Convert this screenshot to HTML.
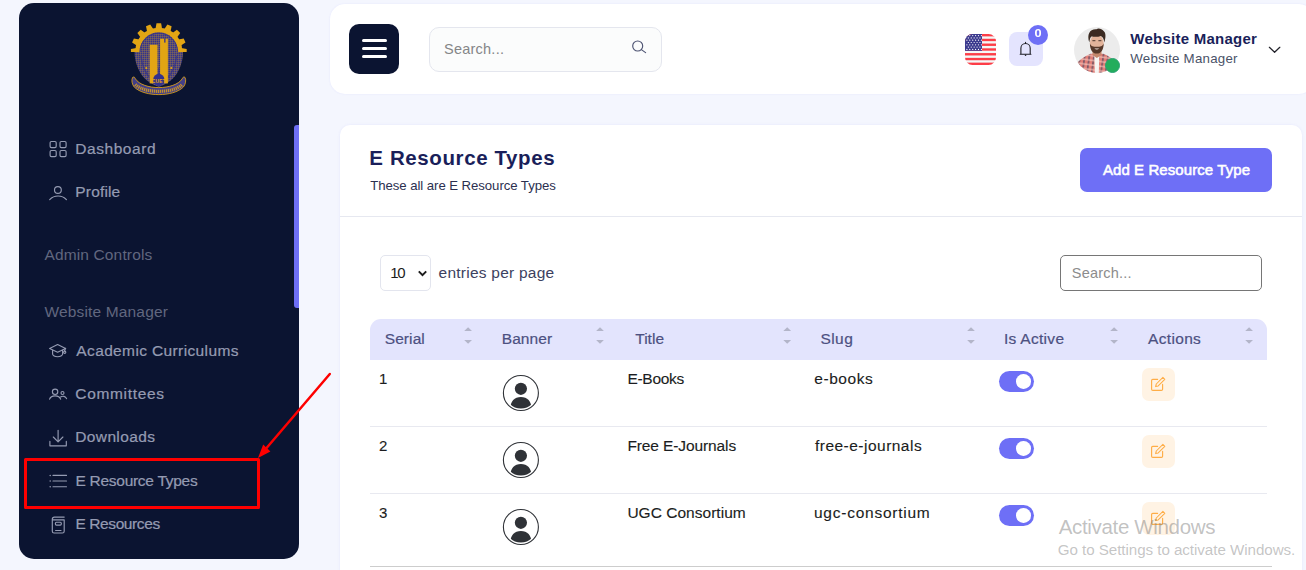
<!DOCTYPE html>
<html lang="en">
<head>
<meta charset="utf-8">
<title>E Resource Types</title>
<style>
*{box-sizing:border-box;margin:0;padding:0}
html,body{width:1306px;height:570px;overflow:hidden}
body{background:#f4f6fe;font-family:"Liberation Sans",sans-serif;position:relative}
.a{position:absolute}
.t{position:absolute;white-space:pre;line-height:30px;height:30px}
.sidebar{left:19px;top:3px;width:280px;height:556px;border-radius:15px;background:#0b1431}
.thumb{left:294px;top:125px;width:5px;height:183px;border-radius:3px 0 0 3px;background:#6e6ff6}
.header{left:330px;top:4px;width:984px;height:90px;border-radius:15px;background:#fff;box-shadow:0 0 2px rgba(110,111,246,.12)}
.burger{left:349px;top:24px;width:50px;height:50px;border-radius:10px;background:#0b1431}
.burger i{position:absolute;left:13px;width:25px;height:3px;border-radius:2px;background:#fff}
.search{left:429px;top:27px;width:233px;height:45px;border-radius:10px;background:#fbfcfc;border:1px solid #e4e6ee}
.bell{left:1008.8px;top:32.3px;width:33.8px;height:34px;border-radius:8px;background:#e4e4fe}
.badge{left:1028px;top:24.8px;width:20.2px;height:20.2px;border-radius:50%;background:#6e6ff6;color:#fff;font-size:11.2px;font-weight:700;text-align:center;line-height:17.2px}
.badge b{display:inline-block;transform:scaleX(1.14)}
.dot{left:1105px;top:58px;width:15px;height:15px;border-radius:50%;background:#23ad5c;border:1.5px solid #29a272}
.card{left:340px;top:125px;width:962px;height:460px;border-radius:10px 10px 0 0;background:#fff;box-shadow:0 0 3px rgba(110,111,246,.10)}
.hr{left:340px;top:216px;width:962px;height:1px;background:#e6e8f0}
.addbtn{left:1080px;top:148px;width:192px;height:44px;border-radius:7px;background:#6e6ff6}
.sel{left:380px;top:255px;width:51px;height:36px;border-radius:5px;border:1px solid #e3e5ee;background:#fff}
.tsearch{left:1060px;top:255px;width:202px;height:36px;border-radius:5px;border:1px solid #767676;background:#fff}
.thead{left:370px;top:319px;width:897px;height:41px;border-radius:11px 11px 0 0;background:#e3e4fd}
.rl{left:370px;width:897px;height:1px;background:#e8e9f0}
.tog{left:999px;width:35px;height:21px;border-radius:11px;background:#6e6ff6}
.tog i{position:absolute;right:3px;top:3.2px;width:14.6px;height:14.6px;border-radius:50%;background:#fff}
.edit{left:1142px;width:33px;height:33px;border-radius:7px;background:#fff3e4}
.redbox{left:24px;top:458px;width:236px;height:51px;border:3px solid #fe0000;border-radius:1.5px}
</style>
</head>
<body>
<aside>
<div class="a sidebar"></div>
<div class="a thumb"></div>
<svg class="a" style="left:124px;top:16px" width="70" height="84" viewBox="124 16 70 84"><defs><pattern id="grid" width="2" height="2" patternUnits="userSpaceOnUse"><rect width="2" height="2" fill="#33328c"/><path d="M0 .4H2M.4 0V2" stroke="#9c7c44" stroke-width=".46"/></pattern><clipPath id="gclip"><rect x="124" y="16" width="70" height="36.1"/></clipPath></defs><circle cx="158.8" cy="51.2" r="20" fill="url(#grid)"/><path d="M134.6 50 H183 C183.4 58 181.5 65 178 71.5 C174 79 167 84 158.8 86.8 C150.6 84 143.6 79 139.6 71.5 C136.1 65 134.2 58 134.6 50 Z" fill="url(#grid)"/><g clip-path="url(#gclip)"><polygon points="136.3,47.9 130.9,48.9 130.9,53.5 136.3,54.5" fill="#e2a514"/><polygon points="139.3,39.5 133.9,38.4 132.1,42.6 136.7,45.6" fill="#e2a514"/><polygon points="145.2,33.0 140.7,29.8 137.4,33.1 140.6,37.6" fill="#e2a514"/><polygon points="153.2,29.1 150.2,24.5 146.0,26.3 147.1,31.7" fill="#e2a514"/><polygon points="162.1,28.7 161.1,23.3 156.5,23.3 155.5,28.7" fill="#e2a514"/><polygon points="170.5,31.7 171.6,26.3 167.4,24.5 164.4,29.1" fill="#e2a514"/><polygon points="177.0,37.6 180.2,33.1 176.9,29.8 172.4,33.0" fill="#e2a514"/><polygon points="180.9,45.6 185.5,42.6 183.7,38.4 178.3,39.5" fill="#e2a514"/><polygon points="181.3,54.5 186.7,53.5 186.7,48.9 181.3,47.9" fill="#e2a514"/><circle cx="158.8" cy="51.2" r="21.2" fill="none" stroke="#e2a514" stroke-width="4.6"/></g><path d="M139.9 52.1 A18.9 18.9 0 0 1 177.70000000000002 52.1" fill="none" stroke="#33328c" stroke-width=".9"/><path d="M141 56 C142 66 146 74 151 79" fill="none" stroke="#33328c" stroke-width="1.5" opacity=".7"/><path d="M176.6 56 C175.6 66 171.6 74 166.6 79" fill="none" stroke="#33328c" stroke-width="1.5" opacity=".7"/><rect x="149.7" y="44.8" width="7.8" height="38.6" fill="#e2a514"/><rect x="160.1" y="38.8" width="7.8" height="44.6" fill="#e2a514"/><rect x="164.2" y="38.4" width="1.3" height="4.2" fill="#33328c"/><circle cx="146.3" cy="68" r="1.1" fill="#e2a514"/><circle cx="171.3" cy="68" r="1.1" fill="#e2a514"/><path d="M153.2 83.4 V79.4 A5.6 5.6 0 0 1 164.4 79.4 V83.4 L158.8 86.4 Z" fill="#33328c"/><rect x="158.35" y="68" width=".9" height="7" fill="#33328c"/><text x="158.9" y="82.9" font-family="Liberation Sans, sans-serif" font-size="4.9" font-weight="700" fill="#e2a514" text-anchor="middle" letter-spacing=".25">CUET</text><path d="M132.6 77.4 C133.6 76.6 135 77.2 135.4 78.8 C139 84.6 149 87.6 158.8 87.6 C168.6 87.6 178.6 84.6 182.2 78.8 C182.6 77.2 184 76.6 185 77.4 C186.4 80 185.6 84.4 183.4 87 C178 92.4 168 94.6 158.8 94.6 C149.6 94.6 139.6 92.4 134.2 87 C132 84.4 131.2 80 132.6 77.4 Z" fill="#433f88" stroke="#e2a514" stroke-width="1" stroke-linejoin="round" stroke-opacity=".85"/><path d="M135.4 84.4 C140 89.4 150 91.3 158.8 91.3 C167.6 91.3 177.6 89.4 182.2 84.4" fill="none" stroke="#e2a514" stroke-width="3.2" stroke-dasharray="1.3 .7" opacity=".8"/></svg><svg class="a" style="left:44px;top:130px" width="30" height="410" viewBox="44 130 30 410"><rect x="50.1" y="141.5" width="6.1" height="6.1" rx="1.3" fill="none" stroke="#959bb2" stroke-width="1.15" stroke-linecap="round" stroke-linejoin="round"/><rect x="50.1" y="150.5" width="6.1" height="6.1" rx="1.3" fill="none" stroke="#959bb2" stroke-width="1.15" stroke-linecap="round" stroke-linejoin="round"/><rect x="60.0" y="141.5" width="6.1" height="6.1" rx="1.3" fill="none" stroke="#959bb2" stroke-width="1.15" stroke-linecap="round" stroke-linejoin="round"/><rect x="60.0" y="150.5" width="6.1" height="6.1" rx="1.3" fill="none" stroke="#959bb2" stroke-width="1.15" stroke-linecap="round" stroke-linejoin="round"/><circle cx="57.9" cy="190" r="3.4" fill="none" stroke="#959bb2" stroke-width="1.15" stroke-linecap="round" stroke-linejoin="round"/><path d="M49.7 199.6 A11.5 11.5 0 0 1 66.4 199.6" fill="none" stroke="#959bb2" stroke-width="1.15" stroke-linecap="round" stroke-linejoin="round"/><path d="M49.6 348.4 L57.6 344.6 L65.6 348.4 L57.6 352.2 Z" fill="none" stroke="#959bb2" stroke-width="1.15" stroke-linecap="round" stroke-linejoin="round"/><path d="M52.6 350.2 V354.2 C53.6 357.6 61.6 357.6 62.6 354.2 V350.2" fill="none" stroke="#959bb2" stroke-width="1.15" stroke-linecap="round" stroke-linejoin="round"/><path d="M65.6 348.4 L64.6 350.8" fill="none" stroke="#959bb2" stroke-width="1.15" stroke-linecap="round" stroke-linejoin="round"/><circle cx="64.7" cy="352.2" r="1.1" fill="none" stroke="#959bb2" stroke-width="1.15" stroke-linecap="round" stroke-linejoin="round"/><circle cx="55.1" cy="391.8" r="2.7" fill="none" stroke="#959bb2" stroke-width="1.15" stroke-linecap="round" stroke-linejoin="round"/><path d="M49.6 399.2 C51 394.8 59.2 394.8 60.6 399.2" fill="none" stroke="#959bb2" stroke-width="1.15" stroke-linecap="round" stroke-linejoin="round"/><circle cx="62.5" cy="393" r="1.5" fill="none" stroke="#959bb2" stroke-width="1.15" stroke-linecap="round" stroke-linejoin="round"/><path d="M60.6 397 C62.6 395.6 65.6 396.2 66.6 398.6" fill="none" stroke="#959bb2" stroke-width="1.15" stroke-linecap="round" stroke-linejoin="round"/><path d="M58.1 430.3 V441.6 M53.3 437 L58.1 441.8 L62.9 437" fill="none" stroke="#959bb2" stroke-width="1.15" stroke-linecap="round" stroke-linejoin="round"/><path d="M49.9 441.4 V445.8 H66.3 V441.4" fill="none" stroke="#959bb2" stroke-width="1.15" stroke-linecap="round" stroke-linejoin="round"/><path d="M53 475.4 H66.5" fill="none" stroke="#959bb2" stroke-width="1.15" stroke-linecap="round" stroke-linejoin="round"/><circle cx="50.2" cy="475.4" r=".75" fill="#959bb2"/><path d="M53 481.0 H66.5" fill="none" stroke="#959bb2" stroke-width="1.15" stroke-linecap="round" stroke-linejoin="round"/><circle cx="50.2" cy="481.0" r=".75" fill="#959bb2"/><path d="M53 486.7 H66.5" fill="none" stroke="#959bb2" stroke-width="1.15" stroke-linecap="round" stroke-linejoin="round"/><circle cx="50.2" cy="486.7" r=".75" fill="#959bb2"/><path d="M64.2 517.1 H54.4 Q52.3 517.1 52.3 519.2 V531.2 Q52.3 533 54.1 533 H62.4 Q64.2 533 64.2 531.2 V519.9 H53" fill="none" stroke="#959bb2" stroke-width="1.15" stroke-linecap="round" stroke-linejoin="round"/><rect x="55.4" y="522.2" width="5.9" height="2.9" rx="1" fill="none" stroke="#959bb2" stroke-width="1.15" stroke-linecap="round" stroke-linejoin="round"/><path d="M55.6 530.5 H61" fill="none" stroke="#959bb2" stroke-width="1.15" stroke-linecap="round" stroke-linejoin="round"/></svg>
<span class='t' style='left:75.30px;top:133.83px;font-size:15.5px;font-weight:400;color:#959bb2;letter-spacing:0.550px;-webkit-text-stroke:.22px #959bb2'>Dashboard</span>
<span class='t' style='left:75.30px;top:176.93px;font-size:15.5px;font-weight:400;color:#959bb2;letter-spacing:0.167px;-webkit-text-stroke:.22px #959bb2'>Profile</span>
<span class='t' style='left:44.40px;top:240.03px;font-size:15.5px;font-weight:400;color:#61677f;letter-spacing:0.146px;'>Admin Controls</span>
<span class='t' style='left:44.40px;top:296.73px;font-size:15.5px;font-weight:400;color:#61677f;letter-spacing:0.164px;'>Website Manager</span>
<span class='t' style='left:76.30px;top:335.63px;font-size:15.5px;font-weight:400;color:#959bb2;letter-spacing:0.374px;-webkit-text-stroke:.22px #959bb2'>Academic Curriculums</span>
<span class='t' style='left:75.30px;top:378.63px;font-size:15.5px;font-weight:400;color:#959bb2;letter-spacing:0.667px;-webkit-text-stroke:.22px #959bb2'>Committees</span>
<span class='t' style='left:75.30px;top:422.23px;font-size:15.5px;font-weight:400;color:#959bb2;letter-spacing:0.362px;-webkit-text-stroke:.22px #959bb2'>Downloads</span>
<span class='t' style='left:75.50px;top:465.73px;font-size:15.5px;font-weight:400;color:#959bb2;letter-spacing:-0.280px;-webkit-text-stroke:.22px #959bb2'>E Resource Types</span>
<span class='t' style='left:75.50px;top:508.83px;font-size:15.5px;font-weight:400;color:#959bb2;letter-spacing:-0.410px;-webkit-text-stroke:.22px #959bb2'>E Resources</span>
</aside>
<header>
<div class="a header"></div>
<div class="a burger"><i style="top:15px"></i><i style="top:23px"></i><i style="top:31px"></i></div>
<div class="a search"></div>
<div class="a bell"></div>
<div class="a badge"><b>0</b></div>
<svg class="a" style="left:628px;top:38px" width="22" height="20" viewBox="628 38 22 20"><circle cx="637.7" cy="46" r="5" fill="none" stroke="#4d5372" stroke-width="1.15"/><path d="M641.4 49.6 L645.6 52.6" stroke="#4d5372" stroke-width="1.15" stroke-linecap="round"/></svg><svg class="a" style="left:965px;top:34px" width="31" height="31" viewBox="0 0 31 31"><defs><clipPath id="fc"><rect width="31" height="31" rx="7.5"/></clipPath></defs><g clip-path="url(#fc)"><rect width="31" height="31" fill="#f3f8f8"/><rect x="0" y="0.00" width="31" height="2.38" fill="#fd3d47"/><rect x="0" y="4.77" width="31" height="2.38" fill="#fd3d47"/><rect x="0" y="9.54" width="31" height="2.38" fill="#fd3d47"/><rect x="0" y="14.31" width="31" height="2.38" fill="#fd3d47"/><rect x="0" y="19.08" width="31" height="2.38" fill="#fd3d47"/><rect x="0" y="23.85" width="31" height="2.38" fill="#fd3d47"/><rect x="0" y="28.62" width="31" height="2.38" fill="#fd3d47"/><rect width="17" height="16.8" fill="#3c3b8f"/><circle cx="1.90" cy="1.60" r=".62" fill="#fff"/><circle cx="4.80" cy="1.60" r=".62" fill="#fff"/><circle cx="7.70" cy="1.60" r=".62" fill="#fff"/><circle cx="10.60" cy="1.60" r=".62" fill="#fff"/><circle cx="13.50" cy="1.60" r=".62" fill="#fff"/><circle cx="16.40" cy="1.60" r=".62" fill="#fff"/><circle cx="3.35" cy="3.90" r=".62" fill="#fff"/><circle cx="6.25" cy="3.90" r=".62" fill="#fff"/><circle cx="9.15" cy="3.90" r=".62" fill="#fff"/><circle cx="12.05" cy="3.90" r=".62" fill="#fff"/><circle cx="14.95" cy="3.90" r=".62" fill="#fff"/><circle cx="1.90" cy="6.20" r=".62" fill="#fff"/><circle cx="4.80" cy="6.20" r=".62" fill="#fff"/><circle cx="7.70" cy="6.20" r=".62" fill="#fff"/><circle cx="10.60" cy="6.20" r=".62" fill="#fff"/><circle cx="13.50" cy="6.20" r=".62" fill="#fff"/><circle cx="16.40" cy="6.20" r=".62" fill="#fff"/><circle cx="3.35" cy="8.50" r=".62" fill="#fff"/><circle cx="6.25" cy="8.50" r=".62" fill="#fff"/><circle cx="9.15" cy="8.50" r=".62" fill="#fff"/><circle cx="12.05" cy="8.50" r=".62" fill="#fff"/><circle cx="14.95" cy="8.50" r=".62" fill="#fff"/><circle cx="1.90" cy="10.80" r=".62" fill="#fff"/><circle cx="4.80" cy="10.80" r=".62" fill="#fff"/><circle cx="7.70" cy="10.80" r=".62" fill="#fff"/><circle cx="10.60" cy="10.80" r=".62" fill="#fff"/><circle cx="13.50" cy="10.80" r=".62" fill="#fff"/><circle cx="16.40" cy="10.80" r=".62" fill="#fff"/><circle cx="3.35" cy="13.10" r=".62" fill="#fff"/><circle cx="6.25" cy="13.10" r=".62" fill="#fff"/><circle cx="9.15" cy="13.10" r=".62" fill="#fff"/><circle cx="12.05" cy="13.10" r=".62" fill="#fff"/><circle cx="14.95" cy="13.10" r=".62" fill="#fff"/><circle cx="1.90" cy="15.40" r=".62" fill="#fff"/><circle cx="4.80" cy="15.40" r=".62" fill="#fff"/><circle cx="7.70" cy="15.40" r=".62" fill="#fff"/><circle cx="10.60" cy="15.40" r=".62" fill="#fff"/><circle cx="13.50" cy="15.40" r=".62" fill="#fff"/><circle cx="16.40" cy="15.40" r=".62" fill="#fff"/></g></svg><svg class="a" style="left:1015px;top:38px" width="22" height="22" viewBox="1015 38 22 22"><path d="M1020.2 54.2 H1030.9 M1020.9 54.2 V48.2 A4.65 4.65 0 0 1 1030.2 48.2 V54.2 M1025.55 43.4 V42.4" fill="none" stroke="#1d1d24" stroke-width="1.1" stroke-linecap="round"/><circle cx="1025.55" cy="55.2" r=".8" fill="#1d1d24"/></svg><svg class="a" style="left:1074px;top:27px" width="46" height="46" viewBox="0 0 46 46"><defs><clipPath id="ac"><circle cx="23" cy="23" r="23"/></clipPath><filter id="ab" x="-10%" y="-10%" width="120%" height="120%"><feGaussianBlur stdDeviation=".55"/></filter><pattern id="plaid" width="4.6" height="4.6" patternUnits="userSpaceOnUse" patternTransform="rotate(8)"><rect width="4.6" height="4.6" fill="#e27d76"/><rect width="1.7" height="4.6" fill="#5d4a60" opacity=".75"/><rect width="4.6" height="1.6" y="2.2" fill="#f3c0b6" opacity=".75"/></pattern></defs><g clip-path="url(#ac)"><rect width="46" height="46" fill="#ececec"/><g filter="url(#ab)"><path d="M-1 46 C0 37 6 31.5 16.5 26.8 L29.5 26.8 C40 31.5 44.5 37 45.5 46 Z" fill="url(#plaid)"/><path d="M20.4 29 H25.2 L24.8 46 H20.8 Z" fill="#f6f4f2"/><path d="M18.5 22 H27.5 V28 L22.8 31 L18.5 28 Z" fill="#c4876c"/><ellipse cx="22.8" cy="16.2" rx="6.9" ry="8.4" fill="#e2b39a"/><path d="M18.4 13.6 H21.4 M24.4 13.6 H27.4" stroke="#4a342a" stroke-width="1.1" opacity=".8"/><path d="M15.9 16.5 C16 23 18.6 26.6 22.8 26.6 C27 26.6 29.6 23 29.7 16.5 C28.4 19.6 26.2 19.8 22.8 19.8 C19.4 19.8 17.2 19.6 15.9 16.5 Z" fill="#553729"/><path d="M20.3 21.4 Q22.8 23.4 25.3 21.4 Z" fill="#f5ebe6"/><path d="M15.3 15.5 C12.6 7 16 1.6 22.5 2.2 C24.5 .8 28 2 29.6 4 C32.4 6.2 31.6 11 30.4 15.5 C29.8 11.6 28.6 9.6 26.6 9 C23 10.6 18.6 9.4 17.4 9.4 C16 10.6 15.8 12.6 15.3 15.5 Z" fill="#3a2a22"/></g></g></svg><svg class="a" style="left:1266px;top:43px" width="18" height="14" viewBox="1266 43 18 14"><path d="M1269.4 47.3 L1274.6 52.3 L1279.8 47.3" fill="none" stroke="#23232b" stroke-width="1.25" stroke-linecap="round" stroke-linejoin="round"/></svg>
<div class="a dot"></div>
<span class='t' style='left:444.00px;top:34.38px;font-size:14.5px;font-weight:400;color:#858688;letter-spacing:0.237px;'>Search...</span>
<span class='t' style='left:1130.30px;top:23.50px;font-size:15px;font-weight:700;color:#1a1f5a;letter-spacing:0.250px;'>Website Manager</span>
<span class='t' style='left:1130.30px;top:44.19px;font-size:13.3px;font-weight:400;color:#4a5268;letter-spacing:0.229px;'>Website Manager</span>
</header>
<main>
<div class="a card"></div>
<div class="a hr"></div>
<div class="a addbtn"></div>
<div class="a sel"></div>
<div class="a tsearch"></div>
<div class="a thead"></div>
<div class="a rl" style="top:426px"></div>
<div class="a rl" style="top:493px"></div>
<div class="a rl" style="top:566px;width:902px;background:#cdcdcd"></div>
<div class="a tog" style="top:371px"><i></i></div>
<div class="a tog" style="top:438px"><i></i></div>
<div class="a tog" style="top:505px"><i></i></div>
<div class="a edit" style="top:368px"></div>
<div class="a edit" style="top:435px"></div>
<div class="a edit" style="top:502px"></div>
<svg class="a" style="left:414px;top:266px" width="16" height="14" viewBox="414 266 16 14"><path d="M418.8 271.4 L422.5 275.1 L426.2 271.4" fill="none" stroke="#1b1b1b" stroke-width="2" /></svg><svg class="a" style="left:370px;top:319px" width="897" height="41" viewBox="370 319 897 41"><path d="M464.20000000000005 331 L468.1 327.3 L472.0 331 Z M464.20000000000005 340 L468.1 343.7 L472.0 340 Z" fill="#b3b5c9"/><path d="M596.1 331 L600.0 327.3 L603.9 331 Z M596.1 340 L600.0 343.7 L603.9 340 Z" fill="#b3b5c9"/><path d="M783.3000000000001 331 L787.2 327.3 L791.1 331 Z M783.3000000000001 340 L787.2 343.7 L791.1 340 Z" fill="#b3b5c9"/><path d="M967.1 331 L971.0 327.3 L974.9 331 Z M967.1 340 L971.0 343.7 L974.9 340 Z" fill="#b3b5c9"/><path d="M1110.1999999999998 331 L1114.1 327.3 L1118.0 331 Z M1110.1999999999998 340 L1114.1 343.7 L1118.0 340 Z" fill="#b3b5c9"/><path d="M1245.1999999999998 331 L1249.1 327.3 L1253.0 331 Z M1245.1999999999998 340 L1249.1 343.7 L1253.0 340 Z" fill="#b3b5c9"/></svg><svg class="a" style="left:502px;top:373.7px" width="38" height="38" viewBox="502 373.7 38 38"><defs><clipPath id="uc0"><circle cx="520.9" cy="392.7" r="15.6"/></clipPath></defs><circle cx="520.9" cy="392.7" r="17.5" fill="#fff" stroke="#2f3237" stroke-width="1.1"/><circle cx="520.9" cy="388.5" r="6.1" fill="#2f3237"/><g clip-path="url(#uc0)"><path d="M510.3 408.7 C510.3 400.7 514.5 396.59999999999997 520.9 396.59999999999997 C527.3 396.59999999999997 531.5 400.7 531.5 408.7 Z" fill="#2f3237"/></g></svg><svg class="a" style="left:502px;top:440.7px" width="38" height="38" viewBox="502 440.7 38 38"><defs><clipPath id="uc1"><circle cx="520.9" cy="459.7" r="15.6"/></clipPath></defs><circle cx="520.9" cy="459.7" r="17.5" fill="#fff" stroke="#2f3237" stroke-width="1.1"/><circle cx="520.9" cy="455.5" r="6.1" fill="#2f3237"/><g clip-path="url(#uc1)"><path d="M510.3 475.7 C510.3 467.7 514.5 463.59999999999997 520.9 463.59999999999997 C527.3 463.59999999999997 531.5 467.7 531.5 475.7 Z" fill="#2f3237"/></g></svg><svg class="a" style="left:502px;top:507.7px" width="38" height="38" viewBox="502 507.7 38 38"><defs><clipPath id="uc2"><circle cx="520.9" cy="526.7" r="15.6"/></clipPath></defs><circle cx="520.9" cy="526.7" r="17.5" fill="#fff" stroke="#2f3237" stroke-width="1.1"/><circle cx="520.9" cy="522.5" r="6.1" fill="#2f3237"/><g clip-path="url(#uc2)"><path d="M510.3 542.7 C510.3 534.7 514.5 530.6 520.9 530.6 C527.3 530.6 531.5 534.7 531.5 542.7 Z" fill="#2f3237"/></g></svg><svg class="a" style="left:1142px;top:368px" width="33" height="33" viewBox="0 0 33 33"><path d="M15.6 11.4 H10.8 Q9.6 11.4 9.6 12.6 V21.2 Q9.6 22.4 10.8 22.4 H19.4 Q20.6 22.4 20.6 21.2 V16.4" fill="none" stroke="#ffad46" stroke-width="1.15" stroke-linecap="round"/><path d="M13.6 18.6 L14.3 16 L20.9 9.4 L22.8 11.3 L16.2 17.9 Z" fill="#fff3e4" stroke="#ffad46" stroke-width="1.05" stroke-linejoin="round"/></svg><svg class="a" style="left:1142px;top:435px" width="33" height="33" viewBox="0 0 33 33"><path d="M15.6 11.4 H10.8 Q9.6 11.4 9.6 12.6 V21.2 Q9.6 22.4 10.8 22.4 H19.4 Q20.6 22.4 20.6 21.2 V16.4" fill="none" stroke="#ffad46" stroke-width="1.15" stroke-linecap="round"/><path d="M13.6 18.6 L14.3 16 L20.9 9.4 L22.8 11.3 L16.2 17.9 Z" fill="#fff3e4" stroke="#ffad46" stroke-width="1.05" stroke-linejoin="round"/></svg><svg class="a" style="left:1142px;top:502px" width="33" height="33" viewBox="0 0 33 33"><path d="M15.6 11.4 H10.8 Q9.6 11.4 9.6 12.6 V21.2 Q9.6 22.4 10.8 22.4 H19.4 Q20.6 22.4 20.6 21.2 V16.4" fill="none" stroke="#ffad46" stroke-width="1.15" stroke-linecap="round"/><path d="M13.6 18.6 L14.3 16 L20.9 9.4 L22.8 11.3 L16.2 17.9 Z" fill="#fff3e4" stroke="#ffad46" stroke-width="1.05" stroke-linejoin="round"/></svg>
<span class='t' style='left:369.30px;top:142.70px;font-size:20.5px;font-weight:700;color:#1a1f5a;letter-spacing:0.607px;'>E Resource Types</span>
<span class='t' style='left:370.30px;top:170.73px;font-size:13.2px;font-weight:400;color:#2b3050;letter-spacing:-0.066px;'>These all are E Resource Types</span>
<span class='t' style='left:1102.90px;top:154.80px;font-size:15px;font-weight:400;color:#ffffff;letter-spacing:0.083px;-webkit-text-stroke:.55px #fff'>Add E Resource Type</span>
<span class='t' style='left:390.20px;top:258.10px;font-size:15px;font-weight:400;color:#1c1c1c;letter-spacing:-1.300px;'>10</span>
<span class='t' style='left:438.60px;top:257.93px;font-size:15.5px;font-weight:400;color:#3c4160;letter-spacing:0.233px;'>entries per page</span>
<span class='t' style='left:1071.80px;top:257.78px;font-size:14.5px;font-weight:400;color:#8c8c8c;letter-spacing:0.225px;'>Search...</span>
<span class='t' style='left:384.70px;top:324.03px;font-size:15.5px;font-weight:400;color:#4c5081;letter-spacing:0.100px;-webkit-text-stroke:.2px #4c5081'>Serial</span>
<span class='t' style='left:501.70px;top:324.03px;font-size:15.5px;font-weight:400;color:#4c5081;letter-spacing:0.100px;-webkit-text-stroke:.2px #4c5081'>Banner</span>
<span class='t' style='left:635.20px;top:324.03px;font-size:15.5px;font-weight:400;color:#4c5081;letter-spacing:0.050px;-webkit-text-stroke:.2px #4c5081'>Title</span>
<span class='t' style='left:820.40px;top:324.03px;font-size:15.5px;font-weight:400;color:#4c5081;letter-spacing:0.467px;-webkit-text-stroke:.2px #4c5081'>Slug</span>
<span class='t' style='left:1004.00px;top:324.03px;font-size:15.5px;font-weight:400;color:#4c5081;letter-spacing:0.287px;-webkit-text-stroke:.2px #4c5081'>Is Active</span>
<span class='t' style='left:1148.10px;top:324.03px;font-size:15.5px;font-weight:400;color:#4c5081;letter-spacing:0.317px;-webkit-text-stroke:.2px #4c5081'>Actions</span>
<span class='t' style='left:379.00px;top:363.90px;font-size:15px;font-weight:400;color:#1b1d21;letter-spacing:0.000px;-webkit-text-stroke:.12px #1b1d21'>1</span>
<span class='t' style='left:627.50px;top:363.73px;font-size:15.5px;font-weight:400;color:#1b1d21;letter-spacing:-0.317px;-webkit-text-stroke:.12px #1b1d21'>E-Books</span>
<span class='t' style='left:814.30px;top:363.73px;font-size:15.5px;font-weight:400;color:#1b1d21;letter-spacing:0.550px;-webkit-text-stroke:.12px #1b1d21'>e-books</span>
<span class='t' style='left:379.00px;top:430.70px;font-size:15px;font-weight:400;color:#1b1d21;letter-spacing:0.000px;-webkit-text-stroke:.12px #1b1d21'>2</span>
<span class='t' style='left:627.40px;top:430.53px;font-size:15.5px;font-weight:400;color:#1b1d21;letter-spacing:-0.107px;-webkit-text-stroke:.12px #1b1d21'>Free E-Journals</span>
<span class='t' style='left:815.00px;top:430.53px;font-size:15.5px;font-weight:400;color:#1b1d21;letter-spacing:0.479px;-webkit-text-stroke:.12px #1b1d21'>free-e-journals</span>
<span class='t' style='left:379.00px;top:497.70px;font-size:15px;font-weight:400;color:#1b1d21;letter-spacing:0.000px;-webkit-text-stroke:.12px #1b1d21'>3</span>
<span class='t' style='left:627.40px;top:497.53px;font-size:15.5px;font-weight:400;color:#1b1d21;letter-spacing:0.023px;-webkit-text-stroke:.12px #1b1d21'>UGC Consortium</span>
<span class='t' style='left:814.00px;top:497.53px;font-size:15.5px;font-weight:400;color:#1b1d21;letter-spacing:0.754px;-webkit-text-stroke:.12px #1b1d21'>ugc-consortium</span>
</main>
<div class="a redbox"></div>
<svg class="a" style="left:230px;top:360px" width="120" height="110" viewBox="230 360 120 110"><line x1="329.8" y1="374" x2="264" y2="451" stroke="#fe0000" stroke-width="2.5" stroke-linecap="round"/><polygon points="258,458 263.2,444.6 270.4,451.4" fill="#fe0000"/></svg>
<span class='t' style='left:1058.70px;top:511.70px;font-size:20.5px;font-weight:400;color:rgba(125,125,125,.48);letter-spacing:-0.333px;'>Activate Windows</span>
<span class='t' style='left:1057.70px;top:534.53px;font-size:15.2px;font-weight:400;color:rgba(125,125,125,.46);letter-spacing:-0.062px;'>Go to Settings to activate Windows.</span>
</body>
</html>
